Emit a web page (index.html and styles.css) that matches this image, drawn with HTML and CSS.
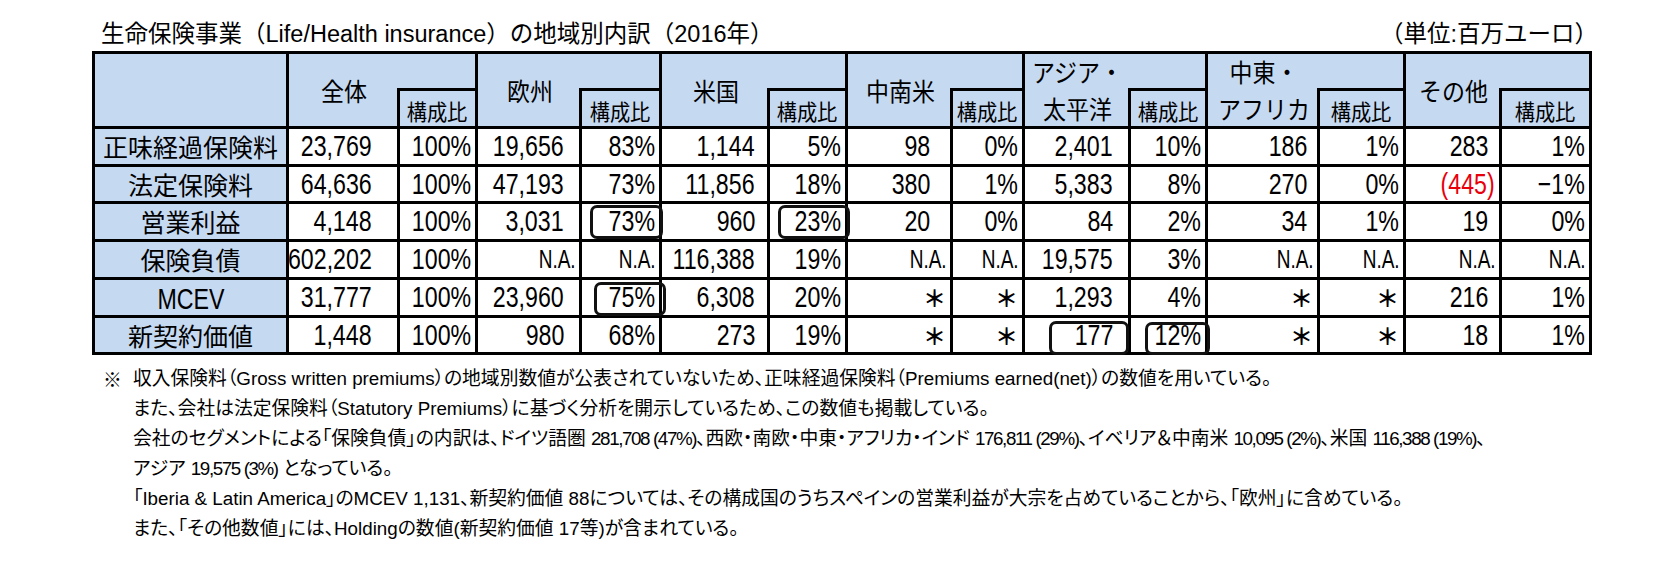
FILE: index.html
```html
<!DOCTYPE html>
<html lang="ja">
<head>
<meta charset="utf-8">
<title>生命保険事業の地域別内訳</title>
<link rel="stylesheet" href="styles.css">
</head>
<body>
<div class="page">
  <div class="head">
    <div class="title"><span class="tx">生命保険事業（Life/Health insurance）の地域別内訳（2016年）</span></div>
    <div class="unit"><span class="tx">（単位:百万ユーロ）</span></div>
  </div>

  <div class="tbl">
    <div class="corner"></div>
    <div class="grp"><span class="g">全体</span></div><div class="gtop"></div>
    <div class="grp"><span class="g">欧州</span></div><div class="gtop"></div>
    <div class="grp"><span class="g">米国</span></div><div class="gtop"></div>
    <div class="grp"><span class="g">中南米</span></div><div class="gtop"></div>
    <div class="grp"><span class="g two">アジア・<br>太平洋</span></div><div class="gtop"></div>
    <div class="grp"><span class="g two">中東・<br>アフリカ</span></div><div class="gtop"></div>
    <div class="grp"><span class="g">その他</span></div><div class="gtop"></div>
    <div class="sub"><span class="s">構成比</span></div>
    <div class="sub"><span class="s">構成比</span></div>
    <div class="sub"><span class="s">構成比</span></div>
    <div class="sub"><span class="s">構成比</span></div>
    <div class="sub"><span class="s">構成比</span></div>
    <div class="sub"><span class="s">構成比</span></div>
    <div class="sub"><span class="s">構成比</span></div>

    <div class="row">
      <div class="lab"><span class="l">正味経過保険料</span></div>
      <div><span class="n">23,769</span></div><div><span class="n">100%</span></div>
      <div><span class="n">19,656</span></div><div><span class="n">83%</span></div>
      <div><span class="n">1,144</span></div><div><span class="n">5%</span></div>
      <div><span class="n">98</span></div><div><span class="n">0%</span></div>
      <div><span class="n">2,401</span></div><div><span class="n">10%</span></div>
      <div><span class="n">186</span></div><div><span class="n">1%</span></div>
      <div><span class="n">283</span></div><div><span class="n">1%</span></div>
    </div>

    <div class="row">
      <div class="lab"><span class="l">法定保険料</span></div>
      <div><span class="n">64,636</span></div><div><span class="n">100%</span></div>
      <div><span class="n">47,193</span></div><div><span class="n">73%</span></div>
      <div><span class="n">11,856</span></div><div><span class="n">18%</span></div>
      <div><span class="n">380</span></div><div><span class="n">1%</span></div>
      <div><span class="n">5,383</span></div><div><span class="n">8%</span></div>
      <div><span class="n">270</span></div><div><span class="n">0%</span></div>
      <div class="neg"><span class="n">(445)</span></div><div><span class="n">−1%</span></div>
    </div>

    <div class="row">
      <div class="lab"><span class="l">営業利益</span></div>
      <div><span class="n">4,148</span></div><div><span class="n">100%</span></div>
      <div><span class="n">3,031</span></div><div class="hb"><span class="n">73%</span><span class="box b1"></span></div>
      <div><span class="n">960</span></div><div class="hb"><span class="n">23%</span><span class="box b2"></span></div>
      <div><span class="n">20</span></div><div><span class="n">0%</span></div>
      <div><span class="n">84</span></div><div><span class="n">2%</span></div>
      <div><span class="n">34</span></div><div><span class="n">1%</span></div>
      <div><span class="n">19</span></div><div><span class="n">0%</span></div>
    </div>

    <div class="row">
      <div class="lab"><span class="l">保険負債</span></div>
      <div><span class="n">602,202</span></div><div><span class="n">100%</span></div>
      <div class="t"><span class="na">N.A.</span></div><div class="t"><span class="na">N.A.</span></div>
      <div><span class="n">116,388</span></div><div><span class="n">19%</span></div>
      <div class="t"><span class="na">N.A.</span></div><div class="t"><span class="na">N.A.</span></div>
      <div><span class="n">19,575</span></div><div><span class="n">3%</span></div>
      <div class="t"><span class="na">N.A.</span></div><div class="t"><span class="na">N.A.</span></div>
      <div class="t"><span class="na">N.A.</span></div><div class="t"><span class="na">N.A.</span></div>
    </div>

    <div class="row">
      <div class="lab"><span class="l lat">MCEV</span></div>
      <div><span class="n">31,777</span></div><div><span class="n">100%</span></div>
      <div><span class="n">23,960</span></div><div class="hb"><span class="n">75%</span><span class="box b3"></span></div>
      <div><span class="n">6,308</span></div><div><span class="n">20%</span></div>
      <div class="a"><span class="ast">＊</span></div><div class="a"><span class="ast">＊</span></div>
      <div><span class="n">1,293</span></div><div><span class="n">4%</span></div>
      <div class="a"><span class="ast">＊</span></div><div class="a"><span class="ast">＊</span></div>
      <div><span class="n">216</span></div><div><span class="n">1%</span></div>
    </div>

    <div class="row">
      <div class="lab"><span class="l">新契約価値</span></div>
      <div><span class="n">1,448</span></div><div><span class="n">100%</span></div>
      <div><span class="n">980</span></div><div><span class="n">68%</span></div>
      <div><span class="n">273</span></div><div><span class="n">19%</span></div>
      <div class="a"><span class="ast">＊</span></div><div class="a"><span class="ast">＊</span></div>
      <div class="hb"><span class="n">177</span><span class="box b4"></span></div><div class="hb"><span class="n">12%</span><span class="box b5"></span></div>
      <div class="a"><span class="ast">＊</span></div><div class="a"><span class="ast">＊</span></div>
      <div><span class="n">18</span></div><div><span class="n">1%</span></div>
    </div>
  </div>

  <div class="notes">
    <div class="mark">※</div>
    <div class="lines">
      <div class="ln">収入保険料（Gross written premiums）の地域別数値が公表されていないため、正味経過保険料（Premiums earned(net)）の数値を用いている。</div>
      <div class="ln">また、会社は法定保険料（Statutory Premiums）に基づく分析を開示しているため、この数値も掲載している。</div>
      <div class="ln">会社のセグメントによる「保険負債」の内訳は、ドイツ語圏 <span class="dg">281,708 (47%)</span>、西欧・南欧・中東・アフリカ・インド <span class="dg">176,811 (29%)</span>、イベリア＆中南米 <span class="dg">10,095 (2%)</span>、米国 <span class="dg">116,388 (19%)</span>、</div>
      <div class="ln">アジア <span class="dg">19,575 (3%)</span> となっている。</div>
      <div class="ln">「Iberia &amp; Latin America」のMCEV 1,131、新契約価値 88については、その構成国のうちスペインの営業利益が大宗を占めていることから、「欧州」に含めている。</div>
      <div class="ln">また、「その他数値」には、Holdingの数値(新契約価値 17等)が含まれている。</div>
    </div>
  </div>
</div>
</body>
</html>
```

FILE: styles.css
```css
:root {
  --blue: #c5d9f1;
  --line: 3px solid #000;
}

html, body {
  margin: 0;
  background: #fff;
}

body {
  font-family: "Liberation Sans", "Noto Sans CJK JP", sans-serif;
  color: #000;
}

.page {
  width: 1500px;
  padding: 19px 0 0 92px;
}

/* ---------- title line ---------- */
.head {
  display: flex;
  justify-content: space-between;
  align-items: center;
  height: 30px;
  margin-bottom: 2px;
  padding: 0 0 0 9px;
  font-size: 23.5px;
  line-height: 30px;
}

.tx {
  display: inline-block;
  white-space: nowrap;
}

.unit {
  font-size: 23.5px;
  margin-right: -6px;
}

/* ---------- table ---------- */
.tbl {
  display: grid;
  grid-template-columns: 194px 111px 78px 104px 80px 108px 78px 105px 72px 106px 77px 112px 86px 96px 90px;
  grid-template-rows: 37px 38px 38px 37px 38px 38px 38px 37px;
  width: max-content;
  border-top: var(--line);
  border-left: var(--line);
}

.tbl > div,
.row > div {
  box-sizing: border-box;
  min-width: 0;
  display: flex;
  align-items: center;
  justify-content: flex-end;
  border-right: var(--line);
  border-bottom: var(--line);
  background: #fff;
  white-space: nowrap;
}

.tbl > .row {
  display: contents;
}

.tbl > .corner {
  grid-row: span 2;
  background: var(--blue);
}

.tbl > .grp {
  grid-row: span 2;
  border-right: none;
  justify-content: center;
  background: var(--blue);
}

.tbl > .gtop {
  margin-left: -3px;
  background: var(--blue);
}

.tbl > .sub {
  margin-left: -3px;
  border-left: var(--line);
  justify-content: center;
  background: var(--blue);
  padding-top: 2px;
}

.g {
  display: inline-block;
  font-family: "Noto Sans CJK JP", sans-serif;
  font-size: 25px;
  line-height: 1;
  transform: scaleX(0.92);
  text-align: center;
}

.g.two {
  line-height: 37px;
}

.s {
  display: inline-block;
  font-family: "Noto Sans CJK JP", sans-serif;
  font-size: 22px;
  line-height: 1;
  transform: scaleX(0.92);
}

.l {
  display: inline-block;
  font-family: "Noto Sans CJK JP", sans-serif;
  font-size: 25px;
  line-height: 1;
}

.l.lat {
  font-family: "Liberation Sans", sans-serif;
  font-size: 29px;
  transform: scaleX(0.8);
  padding-top: 4px;
}

.n,
.na {
  display: inline-block;
  font-family: "Liberation Sans", sans-serif;
  font-size: 29px;
  line-height: 1;
  transform: scaleX(0.8);
  transform-origin: right center;
}

.na {
  font-size: 25px;
  transform: scaleX(0.76);
}

.ast {
  display: inline-block;
  font-family: "Noto Sans CJK JP", sans-serif;
  font-weight: 700;
  font-size: 23px;
  line-height: 1;
}

.row > :nth-child(odd) { padding-right: 4px; }
.row > :nth-child(2)  { padding-right: 25px; }
.row > :nth-child(4)  { padding-right: 15px; }
.row > :nth-child(6)  { padding-right: 12px; }
.row > :nth-child(8)  { padding-right: 20px; }
.row > :nth-child(10) { padding-right: 15px; }
.row > :nth-child(12) { padding-right: 10px; }
.row > :nth-child(14) { padding-right: 11px; }

.row > .t   { padding-right: 3px; }
.row > .a   { padding-right: 4px; }
.row > .neg { padding-right: 4px; color: #e8000b; }

.row > .lab {
  justify-content: center;
  padding-right: 0;
  background: var(--blue);
}

/* ---------- hand-drawn highlight boxes ---------- */
.row > .hb {
  position: relative;
}

.box {
  position: absolute;
  z-index: 1;
  box-sizing: border-box;
  border: 3px solid #111;
  border-radius: 7px;
}

.b1 { left: 8px;  top: 1px; width: 73px; height: 34px; }
.b2 { left: 8px;  top: 1px; width: 72px; height: 34px; }
.b3 { left: 12px; top: 2px; width: 72px; height: 34px; }
.b4 { left: 24px; top: 3px; width: 80px; height: 34px; }
.b5 { left: 14px; top: 4px; width: 65px; height: 33px; }

/* ---------- notes ---------- */
.notes {
  display: flex;
  margin-top: 9px;
  padding-left: 11px;
  font-size: 18.8px;
  line-height: 30px;
  font-feature-settings: "palt";
}

.mark {
  width: 30px;
  flex: none;
  font-family: "Noto Sans CJK JP", sans-serif;
}

.ln {
  white-space: nowrap;
}

.dg {
  letter-spacing: -1.4px;
}
```
